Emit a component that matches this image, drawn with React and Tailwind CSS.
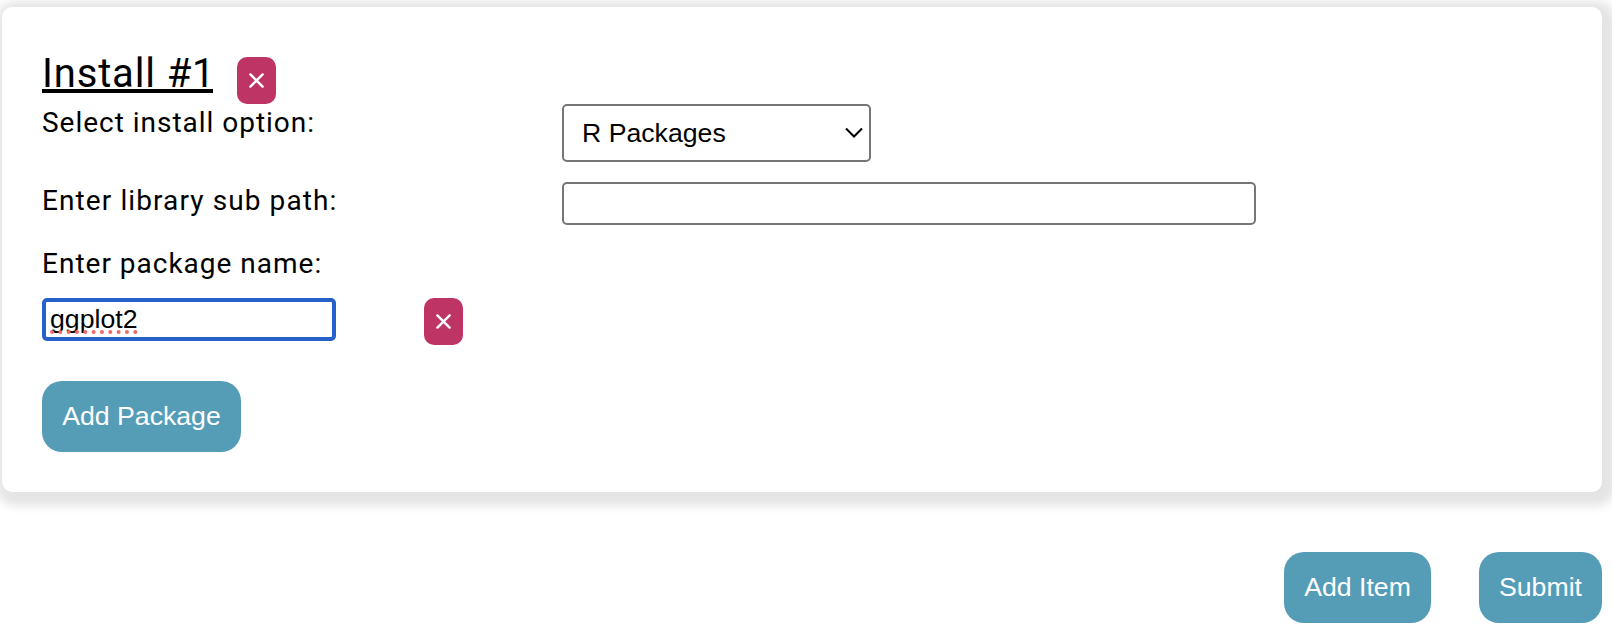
import React from "react";

function RemoveButton() {
  return (
    <button aria-label="Remove" className="flex h-[47px] w-[39px] shrink-0 items-center justify-center rounded-[10px] bg-[#be3465]">
      <svg width="15" height="15" viewBox="0 0 15 15" fill="none" stroke="white" strokeWidth="2.4" strokeLinecap="round">
        <path d="M1.4 1.4 13.6 13.6M13.6 1.4 1.4 13.6" />
      </svg>
    </button>
  );
}

function ActionButton({ className, children }) {
  return (
    <button className={`h-[71px] shrink-0 rounded-[20px] bg-[#559db7] pb-[2px] text-[26.67px] whitespace-nowrap text-white ${className}`}>
      {children}
    </button>
  );
}

const labelClass = "block whitespace-nowrap text-[28px] leading-[34px] font-['Roboto',sans-serif]";

export default function App() {
  return (
    <main className="h-[638px] overflow-hidden bg-white pt-[7px] pr-[10px] pl-[2px] font-['Liberation_Sans',Arial,sans-serif] text-black">
      <section className="h-[485px] rounded-[10px] bg-white pl-10 shadow-[4px_4px_10px_10px_rgba(0,0,0,0.106)]">
        <header className="flex h-[97px] pt-[50px]">
          <h1 className="mr-6 h-[36px] w-[171px] border-b-4 border-black text-[40px] leading-[34px] font-normal tracking-[0.85px] whitespace-nowrap font-['Roboto',sans-serif]">
            Install #1
          </h1>
          <RemoveButton />
        </header>

        <div className="flex h-[78px]">
          <label className={`${labelClass} w-[520px] pt-[2px] tracking-[0.98px]`}>Select install option:</label>
          <div className="flex h-[58px] w-[309px] items-center justify-between rounded-[5px] border-2 border-[#767676] pr-[6px] pl-[18px] text-[26.67px]">
            <span>R Packages</span>
            <svg width="18" height="12" viewBox="0 0 18 12" fill="none" stroke="black" strokeWidth="2">
              <path d="m1 1.5 8 8 8-8" />
            </svg>
          </div>
        </div>

        <div className="flex h-[63px]">
          <label className={`${labelClass} w-[520px] pt-[2px] tracking-[1.1px]`}>Enter library sub path:</label>
          <input aria-label="Library sub path" className="h-[43px] w-[694px] rounded-[5px] border-2 border-[#767676] bg-white outline-none" />
        </div>

        <label className={`${labelClass} h-[53px] pt-[2px] tracking-[1px]`}>Enter package name:</label>

        <div className="flex h-[83px]">
          <div className="mr-[88px] h-[43px] w-[294px] rounded-[5px] border-4 border-[#2561c9] pl-1 text-[26.67px] leading-[34px]">
            <span className="relative inline-block">
              ggplot2
              <svg className="absolute top-[28px] left-0" width="90" height="4" viewBox="0 0 90 4">
                <path d="M2 2h86" stroke="#ed6a66" strokeWidth="4" strokeLinecap="round" strokeDasharray="0 8.33" />
              </svg>
            </span>
          </div>
          <RemoveButton />
        </div>

        <ActionButton className="w-[199px]">Add Package</ActionButton>
      </section>

      <footer className="mt-[60px] flex justify-end gap-12">
        <ActionButton className="w-[147px]">Add Item</ActionButton>
        <ActionButton className="w-[123px]">Submit</ActionButton>
      </footer>
    </main>
  );
}
